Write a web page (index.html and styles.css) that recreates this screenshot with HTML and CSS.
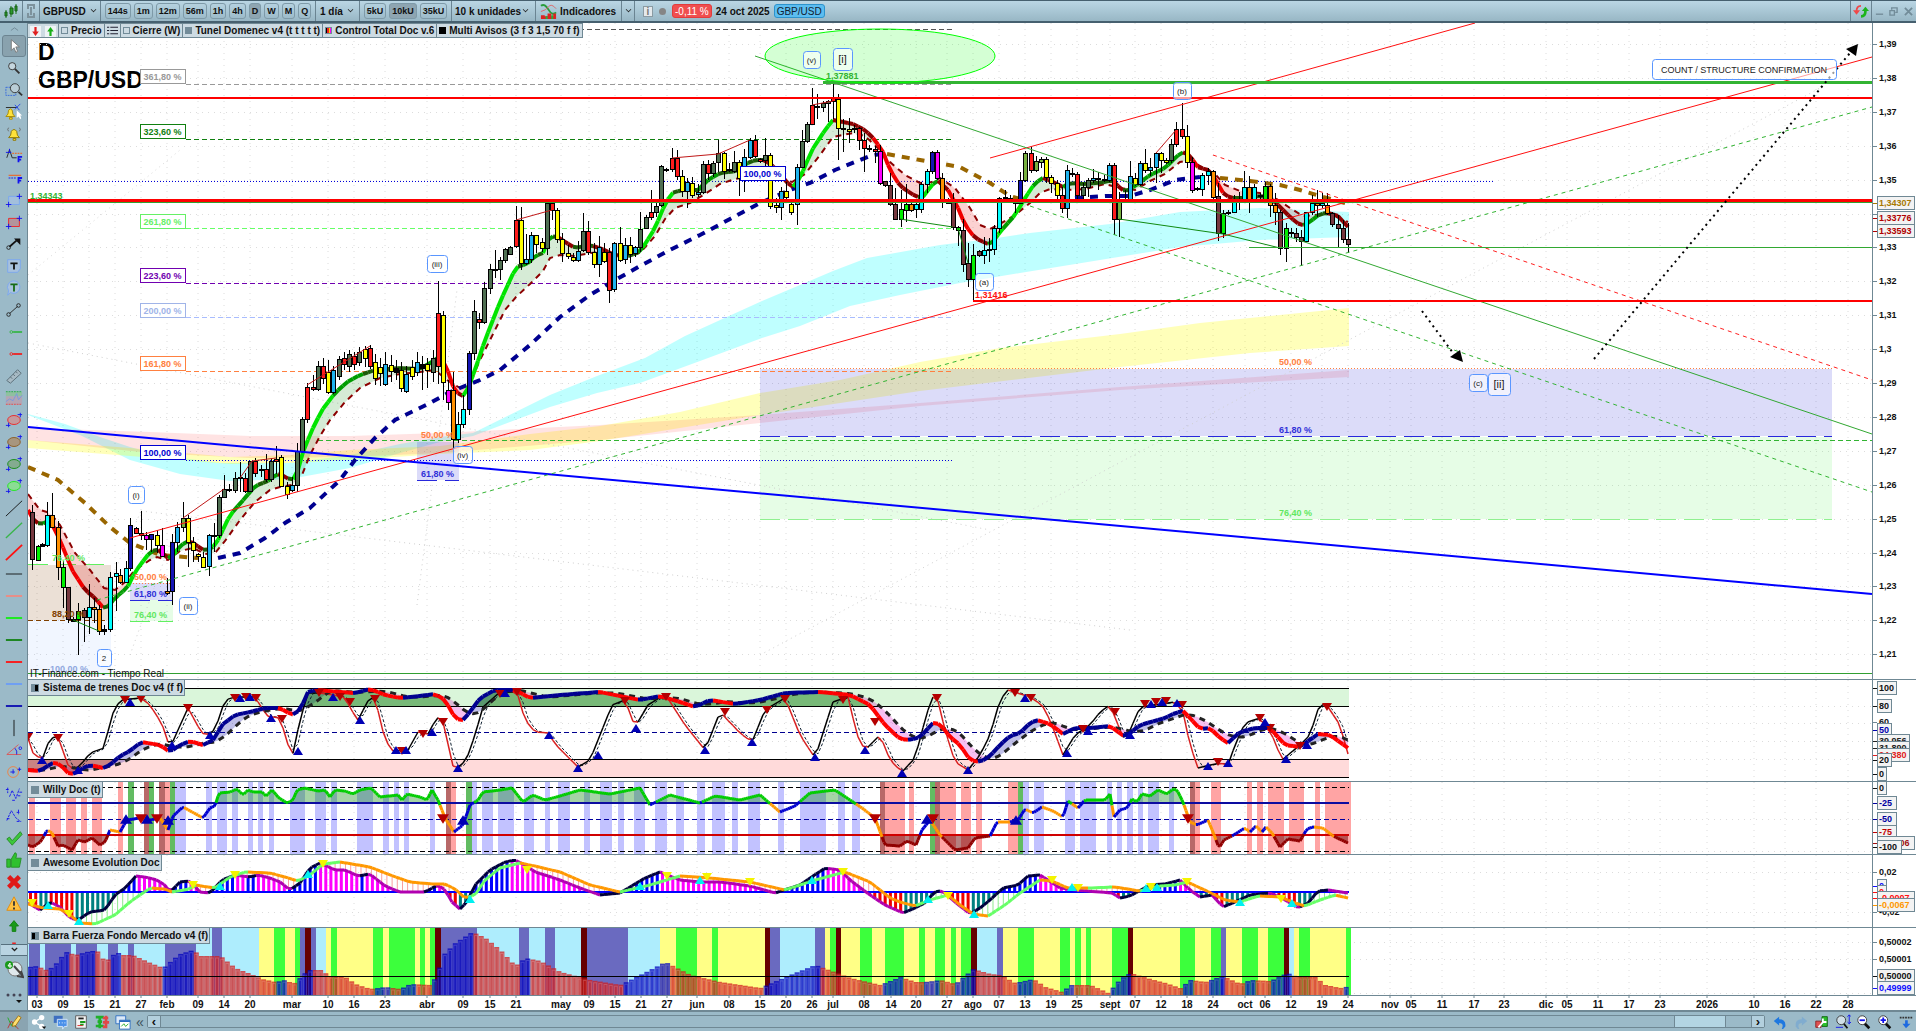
FILE: index.html
```html
<!doctype html>
<html lang="es">
<head>
    <meta charset="utf-8" />
    <title>GBP/USD - D</title>
    <link rel="stylesheet" href="styles.css">
</head>
<body>
<div id="app">
    <!-- barra superior -->
    <div class="topbar">
        <button class="cell logo" aria-label="Gráfico"><svg viewBox="0 0 16 16"><path d="M3 7v8M8 3v11M13 1v10" stroke="#1d7a1d"/><path d="M2 9h2v4H2zM7 5h3v6H7zM12 3h2v5h-2z" fill="#2c9a2c" stroke="#176017"/></svg></button>
        <button class="cell link" aria-label="Vincular"><svg viewBox="0 0 10 16"><path d="M2 6V2h6v4M2 10v4h6v-4M5 4v8" fill="none" stroke="#7d929c" stroke-width="2"/></svg></button>
        <button class="cell symbol">GBPUSD <i class="caret"></i></button>
        <div class="cell group times">
            <button>144s</button><button>1m</button><button>12m</button><button>56m</button><button>1h</button><button>4h</button><button class="on">D</button><button>W</button><button>M</button><button>Q</button>
        </div>
        <button class="cell period">1 día <i class="caret"></i></button>
        <div class="cell group units">
            <button>5kU</button><button class="on">10kU</button><button>35kU</button>
        </div>
        <button class="cell amount">10 k unidades <i class="caret"></i></button>
        <button class="cell ind"><svg viewBox="0 0 18 18"><path d="M1 3q4-3 8 4t8 3" fill="none" stroke="#2a9c3a" stroke-width="2"/><path d="M1 9q5-1 8-5t8 2" fill="none" stroke="#d66" stroke-width="1"/><path d="M1 17v-4h4v1h3v-3h4v3h2v-3h3v6z" fill="#d22"/><path d="M6 17v-3h2v3zM12 17v-4h2v4z" fill="#1fb53a"/></svg> Indicadores</button>
        <button class="cell drop" aria-label="Más indicadores"><i class="caret"></i></button>
        <div class="quote">
            <span class="info">i</span><span class="dot"></span>
            <span class="change">-0,11 %</span>
            <span>24 oct 2025</span>
            <a class="pair" href="#">GBP/USD</a>
        </div>
        <button class="cell refresh" aria-label="Recargar"><svg viewBox="0 0 18 16"><path d="M9 2Q4 2 4 8" fill="none" stroke="#f04848" stroke-width="2"/><path d="M0 7h8l-4 5z" fill="#f04848"/><path d="M9 14q5 0 5-6" fill="none" stroke="#1cb41c" stroke-width="3"/><path d="M10 8h8l-4-5z" fill="#1cb41c"/></svg></button>
        <div class="win">
            <button aria-label="Minimizar"><svg viewBox="0 0 10 10"><path d="M1 8h8" stroke="#728c99" stroke-width="1.5"/></svg></button>
            <button aria-label="Restaurar"><svg viewBox="0 0 10 10"><path d="M3 3V1h6v5H7M1 4h5v5H1z" fill="none" stroke="#728c99" stroke-width="1.5"/></svg></button>
            <button aria-label="Cerrar"><svg viewBox="0 0 10 10"><path d="M1 1l8 8M9 1l-8 8" stroke="#728c99" stroke-width="2"/></svg></button>
        </div>
    </div>

    <!-- herramientas -->
    <div class="side">
        <button class="scroll" aria-label="Subir"><svg viewBox="0 0 10 6"><path d="M1 5l4-3 4 3" fill="none" stroke="#6f8894"/></svg></button>
        <div class="tools">
            <button class="on" aria-label="Cursor"><svg viewBox="0 0 20 20"><path d="M7 3v12l3-3 2 5 2-1-2-5h4z" fill="#fff" stroke="#777"/></svg></button>
            <button aria-label="Zoom"><svg viewBox="0 0 20 20"><circle cx="8" cy="8" r="4" fill="#c5d6de" stroke="#333"/><path d="M11 11l5 5" stroke="#333" stroke-width="2"/></svg></button>
            <button aria-label="Zoom zona"><svg viewBox="0 0 20 20"><path d="M1 7h11v9H1z" fill="none" stroke="#36d" stroke-dasharray="2 1"/><circle cx="11" cy="8" r="5" fill="#b9cdd6" stroke="#333"/><path d="M15 12l4 4" stroke="#333" stroke-width="2"/></svg></button>
            <button aria-label="Alerta línea"><svg viewBox="0 0 20 20"><path d="M1 5h13" stroke="#222"/><path d="M1 15q3-2 3-7 2-3 4 0 0 5 3 7zM5 16h3v2H5z" fill="#ffe23a" stroke="#a98b00"/><path d="M11 2l5 6M17 1l-6 6" stroke="#24e"/><path d="M13 8v9l2-2 2 3 1-1-1-3h2z" fill="#fff"/></svg></button>
            <button aria-label="Alerta"><svg viewBox="0 0 20 20"><path d="M4 14q3-2 3-7 3-4 6 0 0 5 3 7zM9 15h3v2H9z" fill="#ffe23a" stroke="#8b7400"/><path d="M4 3Q2 5 4 7M16 3q2 2 0 4" fill="none" stroke="#666"/></svg></button>
            <button aria-label="Fibonacci"><svg viewBox="0 0 20 20"><path d="M2 12l3-9 3 9h5" fill="none" stroke="#222"/><path d="M1 6h6M5 2v4" stroke="#11e"/><path d="M8 7h11" stroke="#f50" stroke-dasharray="2 1"/><path d="M15 17v-6h4m-4 3h3" fill="none" stroke="#11e" stroke-width="2"/></svg></button>
            <button aria-label="Fibonacci rápido"><svg viewBox="0 0 20 20"><path d="M4 7h14" stroke="#f50"/><path d="M4 10h9" stroke="#11e" stroke-dasharray="2 1"/><path d="M15 16v-6h4m-4 3h3" fill="none" stroke="#11e" stroke-width="2"/></svg></button>
            <button aria-label="Rectángulo azul"><svg viewBox="0 0 20 20"><path d="M4 6h12v9H4z" fill="#a3bfdc" stroke="#79a6f0"/><path d="M1 15h6M4 12v6M13 6h6M16 3v6" stroke="#11e"/></svg></button>
            <button aria-label="Rectángulo rojo"><svg viewBox="0 0 20 20"><path d="M4 6h12v9H4z" fill="#b3949c" stroke="#e22"/><path d="M1 15h6M4 12v6M13 6h6M16 3v6" stroke="#11e"/></svg></button>
            <button aria-label="Flecha"><svg viewBox="0 0 20 20"><circle cx="4" cy="14" r="2" fill="none" stroke="#222"/><path d="M5 13l8-7" stroke="#111" stroke-width="2"/><path d="M10 4h7v7z" fill="#111"/></svg></button>
            <button aria-label="Texto"><svg viewBox="0 0 20 20"><path d="M3 3h14v10l-3 4H3z" fill="#a9c2dd" stroke="#79a6f0"/><path d="M6 7h8M10 7v7" stroke="#111" stroke-width="2"/></svg></button>
            <button aria-label="Comentario"><svg viewBox="0 0 20 20"><path d="M10 2a7 7 0 1 1-4 13l-3 3 1-5A7 7 0 0 1 10 2z" fill="#a9c2dd" stroke="#79a6f0"/><path d="M6 6h8M10 6v8" stroke="#176b17" stroke-width="2"/></svg></button>
            <button aria-label="Segmento"><svg viewBox="0 0 20 20"><path d="M5 14l9-8" stroke="#222"/><circle cx="4" cy="15" r="2" fill="none" stroke="#222"/><circle cx="15" cy="5" r="2" fill="none" stroke="#222"/></svg></button>
            <button aria-label="Semirrecta verde"><svg viewBox="0 0 20 20"><path d="M9 10h10" stroke="#39b54a" stroke-width="2"/><circle cx="7" cy="10" r="1.5" fill="none" stroke="#39b54a"/></svg></button>
            <button aria-label="Semirrecta roja"><svg viewBox="0 0 20 20"><path d="M9 10h10" stroke="#e22" stroke-width="2"/><circle cx="7" cy="10" r="1.5" fill="none" stroke="#e22"/></svg></button>
            <button aria-label="Regla"><svg viewBox="0 0 20 20"><path d="M2 15L14 3l4 4L6 18z" fill="#a7bac4" stroke="#566a74"/><path d="M6 11l2 2M9 8l2 2M12 5l2 2" stroke="#566a74"/></svg></button>
            <button aria-label="Canal"><svg viewBox="0 0 20 20"><path d="M1 3h18v5H1z" fill="#8fc0a0"/><path d="M1 8h18v9H1z" fill="#b3a6b4"/><path d="M1 14l4-3 4 2 4-8 2 7 4-5" fill="none" stroke="#7799e0"/><path d="M1 3h18" stroke="#2a4" stroke-dasharray="2 1"/><path d="M1 17h18" stroke="#e44" stroke-dasharray="2 1"/></svg></button>
            <button aria-label="Elipse roja"><svg viewBox="0 0 20 20"><ellipse cx="10" cy="10" rx="7" ry="5" fill="#c49a9e" stroke="#e22"/><path d="M1 16h5M4 13v5M14 4h5M17 2v5" stroke="#11e"/></svg></button>
            <button aria-label="Elipse marrón"><svg viewBox="0 0 20 20"><ellipse cx="10" cy="10" rx="7" ry="5" fill="#a7967e" stroke="#8a5a20"/><path d="M1 16h5M4 13v5M14 4h5M17 2v5" stroke="#11e"/></svg></button>
            <button aria-label="Elipse verde"><svg viewBox="0 0 20 20"><ellipse cx="10" cy="10" rx="7" ry="5" fill="#84ab90" stroke="#118a11"/><path d="M1 16h5M4 13v5M14 4h5M17 2v5" stroke="#11e"/></svg></button>
            <button aria-label="Elipse lima"><svg viewBox="0 0 20 20"><ellipse cx="10" cy="10" rx="7" ry="5" fill="#8bdc94" stroke="#1be81b"/><path d="M1 16h5M4 13v5M14 4h5M17 2v5" stroke="#11e"/></svg></button>
            <button aria-label="Recta negra"><svg viewBox="0 0 20 20"><path d="M1 19L19 2" stroke="#111"/></svg></button>
            <button aria-label="Recta verde"><svg viewBox="0 0 20 20"><path d="M1 19L19 2" stroke="#39b54a" stroke-width="1.5"/></svg></button>
            <button aria-label="Recta roja"><svg viewBox="0 0 20 20"><path d="M1 19L19 2" stroke="#f11" stroke-width="2"/></svg></button>
            <button aria-label="Horizontal negra"><svg viewBox="0 0 20 20"><path d="M1 10h18" stroke="#111"/></svg></button>
            <button aria-label="Horizontal salmón"><svg viewBox="0 0 20 20"><path d="M1 10h18" stroke="#f08a80" stroke-width="2"/></svg></button>
            <button aria-label="Horizontal lima"><svg viewBox="0 0 20 20"><path d="M1 10h18" stroke="#10f010" stroke-width="2"/></svg></button>
            <button aria-label="Horizontal verde"><svg viewBox="0 0 20 20"><path d="M1 10h18" stroke="#108010" stroke-width="2"/></svg></button>
            <button aria-label="Horizontal roja"><svg viewBox="0 0 20 20"><path d="M1 10h18" stroke="#f11" stroke-width="2"/></svg></button>
            <button aria-label="Horizontal azul"><svg viewBox="0 0 20 20"><path d="M1 10h18" stroke="#6a9cf8" stroke-width="2"/></svg></button>
            <button aria-label="Horizontal marino"><svg viewBox="0 0 20 20"><path d="M1 10h18" stroke="#0a0ab0" stroke-width="2"/></svg></button>
            <button aria-label="Vertical"><svg viewBox="0 0 20 20"><path d="M10 1v18" stroke="#111"/></svg></button>
            <button aria-label="Ángulo"><svg viewBox="0 0 20 20"><path d="M15 4L2 15h16" fill="none" stroke="#d55"/><path d="M11 8q3 3 2 7" fill="none" stroke="#11e"/><circle cx="17" cy="8" r="1.5" fill="none" stroke="#11e"/></svg></button>
            <button aria-label="Ciclo"><svg viewBox="0 0 20 20"><circle cx="9" cy="10" r="6" fill="none" stroke="#f08040"/><path d="M6 10h5M9 7v5M14 7h4M16 5v4" stroke="#11e"/></svg></button>
            <button aria-label="Ondas 12345"><svg viewBox="0 0 20 20"><path d="M1 5h3M3 3v6M5 13l3-7 4 9 4-11M8 17h3M16 8h3M14 12h4" fill="none" stroke="#11e" stroke-dasharray="3 1"/></svg></button>
            <button aria-label="Ondas abc"><svg viewBox="0 0 20 20"><path d="M2 15l5-11 5 8 5 4M2 13h4M13 6h4M15 3v5M13 16h5" fill="none" stroke="#11e" stroke-dasharray="3 1"/></svg></button>
            <button aria-label="Marca"><svg viewBox="0 0 20 20"><path d="M2 11l3-2 3 4 9-10 2 3-11 12z" fill="#3cc83c" stroke="#288a28"/></svg></button>
            <button aria-label="Me gusta"><svg viewBox="0 0 20 20"><path d="M2 9h4v9H2zM7 9l4-7q3 0 1 6h6l-2 10H7z" fill="#2fc12f" stroke="#259025"/></svg></button>
            <button aria-label="Cruz"><svg viewBox="0 0 20 20"><path d="M4 4l12 12M16 4L4 16" stroke="#e01818" stroke-width="5"/></svg></button>
            <button aria-label="Aviso"><svg viewBox="0 0 20 20"><path d="M10 2l8 15H2z" fill="#ffc040" stroke="#e08a10"/><path d="M10 7v5M10 14v2" stroke="#333" stroke-width="2"/></svg></button>
            <button aria-label="Flecha arriba"><svg viewBox="0 0 20 20"><path d="M10 4l5 6h-3v6H8v-6H5z" fill="#1a9a1a" stroke="#108010"/></svg></button>
            <button aria-label="Flecha abajo"><svg viewBox="0 0 20 20"><path d="M8 4h4v6h3l-5 6-5-6h3z" fill="#e22"/></svg></button>
        </div>
        <button class="scroll light" aria-label="Bajar"><svg viewBox="0 0 10 6"><path d="M2 1l3 3 3-3" fill="none" stroke="#222" stroke-width="1.5"/></svg></button>
        <button class="big" aria-label="Plantillas"><svg viewBox="0 0 20 20"><circle cx="11" cy="9" r="7" fill="#dfe8ec" stroke="#777"/><path d="M10 6l8 9M17 11l2 6-6-1" fill="none" stroke="#444" stroke-width="2"/><circle cx="5" cy="5" r="4" fill="#1a9a1a"/><path d="M6 8V3L4 6h4" fill="none" stroke="#fff"/></svg></button>
        <button class="big" aria-label="Más"><svg viewBox="0 0 20 20"><circle cx="4" cy="8" r="1.500" fill="#445"/><circle cx="10" cy="8" r="1.500" fill="#445"/><circle cx="16" cy="8" r="1.500" fill="#445"/><path d="M12 13h6l-3 3z" fill="#111"/></svg></button>
    </div>

    <!-- gráficos -->
    <div class="charts">
        <div class="pane main">
            <h1>D<br>GBP/USD</h1>
            <svg id="price" class="plot"></svg>
            <div class="tabs">
                <button class="ico" aria-label="Vender"><svg viewBox="0 0 10 10"><path d="M0 0h10v10H0z" fill="#eef3f6"/><path d="M4 1h2v4h2L5 9 2 5h2z" fill="#e02020"/></svg></button><button class="ico" aria-label="Comprar"><svg viewBox="0 0 10 10"><path d="M0 0h10v10H0z" fill="#eef3f6"/><path d="M4 9h2V5h2L5 1 2 5h2z" fill="#18b018"/></svg></button>
                <button class="tab"><i class="sq"></i>Precio</button>
                <button class="tab list" aria-label="Lista"><svg viewBox="0 0 10 10"><path d="M0 2h2M0 5h2M0 8h2M3 2h7M3 5h7M3 8h7" stroke="#223"/></svg></button>
                <button class="tab"><i class="sq"></i>Cierre (W)</button>
                <button class="tab"><i class="sq gray"></i>Tunel Domenec v4 (t t t t t)</button>
                <button class="tab"><i class="sq multi"></i>Control Total Doc v.6</button>
                <button class="tab"><i class="sq black"></i>Multi Avisos (3 f 3 1,5 70 f f)</button>
            </div>
        </div>
        <div class="pane trenes"><svg id="trenes" class="plot"></svg><button class="title"><i class="sq half"></i>Sistema de trenes Doc v4 (f f)</button></div>
        <div class="pane willy"><svg id="willy" class="plot"></svg><button class="title"><i class="sq gray"></i>Willy Doc (t)</button></div>
        <div class="pane awesome"><svg id="awesome" class="plot"></svg><button class="title"><i class="sq gray"></i>Awesome Evolution Doc</button></div>
        <div class="pane barra"><svg id="barra" class="plot"></svg><button class="title"><i class="sq flip"></i>Barra Fuerza Fondo Mercado v4 (f)</button></div>
        <div class="dates"><svg id="dates" class="plot"></svg></div>
    </div>

    <!-- barra inferior -->
    <div class="bottom">
        <button class="edit" aria-label="Dibujar"><svg viewBox="0 0 18 18"><path d="M2 4l4 9 2-4 3 6" fill="none" stroke="#2a2"/><path d="M2 16l4-8 8 9" fill="none" stroke="#b33"/><path d="M7 14l1-4 6-8 3 2-6 9z" fill="#ffe070" stroke="#a07010"/></svg></button>
        <button aria-label="Compartir"><svg viewBox="0 0 18 18"><path d="M4 9l8-5M4 9l8 5" stroke="#fff" stroke-width="1.5"/><circle cx="4" cy="9" r="3" fill="#fff"/><circle cx="12" cy="4" r="3" fill="#fff"/><circle cx="12" cy="14" r="3" fill="#fff"/><path d="M12 14h5l-2 3z" fill="#111"/></svg></button>
        <button aria-label="Chat"><svg viewBox="0 0 18 18"><path d="M2 2h10v8H2z" fill="#3d6fc0"/><path d="M6 6h11v8h-3l-2 3v-3H6z" fill="#4a90ea" stroke="#dce9fb"/><path d="M8 10h7" stroke="#fff" stroke-dasharray="1 2"/></svg></button>
        <button aria-label="Informe"><svg viewBox="0 0 18 18"><path d="M3 2h12v14H3z" fill="#f4f4f4" stroke="#555"/><path d="M6 5h6" stroke="#222" stroke-width="2"/><path d="M8 9h5v-1M8 12h4" stroke="#1a9a1a" stroke-width="2"/><path d="M5 13h6" stroke="#d22"/></svg></button>
        <button aria-label="Órdenes"><svg viewBox="0 0 18 18"><path d="M2 2h9v3H2zM4 7h5v3H4zM2 12h9v3H2zM5 2h3v14H5z" fill="#1fb02a"/><path d="M10 3h6v3h-6zM10 8h7v3h-7zM10 13h5v3h-5zM12 2h3v14h-3z" fill="#e04848"/></svg></button>
        <button aria-label="Ventanas"><svg viewBox="0 0 18 18"><path d="M1 2h11v9H1z" fill="#dce9f8" stroke="#2a6cc0"/><path d="M5 7h12v10H5z" fill="#fff" stroke="#2a6cc0"/><path d="M5 7h12v2H5z" fill="#2a6cc0"/><path d="M7 14l3-3 2 3 3-3" fill="none" stroke="#2a2"/></svg></button>
        <button class="fold" aria-label="Plegar">«</button>
        <div class="hscroll">
            <button aria-label="Izquierda">‹</button>
            <div class="track"><span class="thumb"></span></div>
            <button aria-label="Derecha">›</button>
        </div>
        <button aria-label="Deshacer"><svg viewBox="0 0 18 18"><path d="M2 8l6-5v3q8 0 7 8-2 3-4 3 3-7-3-7v3z" fill="#1e78e0"/></svg></button>
        <button class="off" aria-label="Rehacer"><svg viewBox="0 0 18 18"><path d="M16 8l-6-5v3q-8 0-7 8 2 3 4 3-3-7 3-7v3z" fill="#6fa4d4"/></svg></button>
        <button aria-label="Configurar"><svg viewBox="0 0 18 18"><path d="M2 8h6v7H2z" fill="#e05050" stroke="#822"/><path d="M9 3h6v11H9z" fill="#2cc02c" stroke="#161"/><path d="M5 15l6-7M10 5v4h4" stroke="#fff" stroke-width="2" fill="none"/></svg></button>
        <button aria-label="Ajustar zoom"><svg viewBox="0 0 18 18"><circle cx="7" cy="7" r="5" fill="#cfdfe8" stroke="#333"/><path d="M10 11l4 5" stroke="#111" stroke-width="2"/><path d="M1 15h8M16 1v10M14 3l2-2 2 2M14 9l2 2 2-2" stroke="#11e" fill="none"/></svg></button>
        <button aria-label="Alejar"><svg viewBox="0 0 18 18"><circle cx="7" cy="7" r="5" fill="#fff" stroke="#333"/><path d="M10 11l5 5" stroke="#111" stroke-width="3"/><path d="M4 7h6" stroke="#11e" stroke-width="2"/></svg></button>
        <button aria-label="Acercar"><svg viewBox="0 0 18 18"><circle cx="7" cy="7" r="5" fill="#fff" stroke="#333"/><path d="M10 11l5 5" stroke="#111" stroke-width="3"/><path d="M4 7h6M7 4v6" stroke="#11e" stroke-width="2"/></svg></button>
        <button class="last" aria-label="Ir al final"><svg viewBox="0 0 18 18"><path d="M2 4h15" stroke="#333" stroke-width="2" stroke-dasharray="2 1"/><path d="M8 7h3v4h3l-5 5-4-5h3z" fill="#1e6ae0"/></svg></button>
    </div>
</div>
<script src="chart.js"></script>
</body>
</html>
```
FILE: styles.css
```css
*{
    box-sizing:border-box;
    margin:0px;
    padding:0px;
}
html,body{
    width:100%;
    height:100%;
    overflow:hidden;
    background-color:#fff;
    font-family:"Liberation Sans",Arial,sans-serif;
    font-size:10px;
    color:#111;
}
button{
    border:none;
    background:none;
    font:inherit;
    color:inherit;
    cursor:pointer;
}
svg{
    display:block;
}
#app{
    display:grid;
    width:100%;
    height:100%;
    grid-template-columns:28px minmax(0,1fr);
    grid-template-rows:23px minmax(0,1fr) 21px;
}
/* barra superior */
.topbar{
    grid-column:1 / 3;
    display:flex;
    align-items:stretch;
    border-top:1px solid #46606f;
    border-bottom:2px solid #46606f;
    background:linear-gradient(#bad6e4,#98b7c5);
    font-weight:bold;
    white-space:nowrap;
}
.cell{
    display:flex;
    flex:none;
    align-items:center;
    padding:0px 4px;
    gap:3px;
    border-right:1px solid #6a8492;
}
.logo{
    width:23px;
    padding:0px 3px;
}
.link{
    width:17px;
    padding:0px 3px;
}
.symbol{
    width:61px;
    padding:0px 3px;
}
.group{
    justify-content:center;
    font-size:9px;
}
.times{
    width:215px;
}
.period{
    width:44px;
}
.units{
    width:92px;
}
.amount{
    width:84px;
    padding:0px 3px;
    gap:0px;
}
.group button{
    flex:none;
    height:16px;
    padding:0px 2px;
    border:1px solid #7e9aa8;
    border-radius:3px;
}
.group button.on{
    background-color:#8ea5b1;
}
.caret{
    flex:none;
    width:5px;
    height:5px;
    border-right:1px solid #222;
    border-bottom:1px solid #222;
    transform:rotate(45deg) scale(.8);
    margin:0px 0px 3px 2px;
}
.ind{
    width:86px;
}
.ind svg{
    width:17px;
}
.drop{
    width:13px;
    padding:0px 2px;
}
.quote{
    display:flex;
    flex:1;
    align-items:center;
    gap:4px;
    padding-left:8px;
}
.info{
    width:10px;
    height:11px;
    line-height:10px;
    border:1px solid #8b9ba3;
    background-color:#e4e9ec;
    color:#777;
    text-align:center;
}
.dot{
    width:7px;
    height:7px;
    margin:0px 2px;
    border-radius:50%;
    background-color:#858585;
}
.change,.pair{
    height:14px;
    line-height:13px;
    padding:0px 2px;
    border-radius:3px;
    font-weight:normal;
    text-decoration:none;
}
.change{
    background-color:#f04f4f;
    border:1px solid #e23c3c;
    color:#fff;
}
.pair{
    background-color:#5cbdf0;
    border:1px solid #2c93cc;
    color:#123;
}
.refresh{
    width:22px;
    padding:0px 2px;
    border-left:1px solid #6a8492;
}
.refresh svg{
    width:17px;
}
.win{
    display:flex;
    align-items:center;
    width:44px;
    justify-content:space-around;
}
.win svg{
    width:9px;
}
/* herramientas */
.side{
    display:flex;
    flex-direction:column;
    min-height:0px;
    padding-left:1px;
    border-right:1px solid #6f8894;
    background-color:#9bbac8;
}
.side .scroll{
    display:flex;
    align-items:center;
    justify-content:center;
    flex:none;
    height:12px;
}
.scroll svg{
    width:9px;
}
.side .light{
    border-top:1px solid #56707e;
    border-bottom:1px solid #56707e;
    background-color:#b9d4e2;
}
.tools{
    flex:1;
    min-height:0px;
    overflow:hidden;
}
.tools button,.side .big{
    display:flex;
    align-items:center;
    justify-content:center;
    width:24px;
    height:22px;
    margin:auto;
}
.tools .on{
    border:1px solid #6c8491;
    border-radius:3px;
    background-color:#89a2ae;
}
.side .big{
    flex:none;
    height:27px;
}
.tools svg{
    width:18px;
    height:18px;
}
.big svg{
    width:20px;
    height:20px;
}
/* paneles */
.charts{
    display:flex;
    flex-direction:column;
    min-width:0px;
    min-height:0px;
}
.pane{
    position:relative;
    flex:72 1 0px;
    min-height:0px;
    border-bottom:1px solid #6f8894;
}
.main{
    flex-grow:656;
}
.trenes{
    flex-grow:101;
}
.barra{
    flex-grow:67;
}
.dates{
    flex:none;
    height:14px;
    position:relative;
}
.plot{
    position:absolute;
    left:0px;
    top:0px;
    width:100%;
    height:100%;
    overflow:hidden;
    font-family:"Liberation Sans",Arial,sans-serif;
    font-size:9px;
    font-weight:bold;
}
#dates{
    font-size:10px;
}
.tabs{
    position:absolute;
    left:0px;
    top:0px;
    display:flex;
    height:15px;
    border:1px solid #6f8894;
    border-left:none;
    background-color:#cddbe3;
    font-weight:bold;
}
.tab{
    display:flex;
    align-items:center;
    gap:3px;
    padding:0px 2px;
    border-left:1px solid #6f8894;
    white-space:nowrap;
}
.ico{
    width:15px;
    padding:2px;
}
.ico svg,.list svg{
    width:11px;
}
.sq{
    width:8px;
    height:8px;
    border:1px solid #738c99;
}
.tab .sq{
    width:7px;
    height:7px;
}
.gray{
    background-color:#738c99;
}
.black{
    background-color:#000;
    border-color:#000;
}
.half{
    background:linear-gradient(90deg,#738c99 50%,#000 50%);
}
.flip{
    background:linear-gradient(90deg,#000 50%,#738c99 50%);
}
.multi{
    background:linear-gradient(90deg,#000 25%,#e22 25% 50%,#fc0 50% 75%,#f0f 75%);
}
h1{
    padding:15px 10px 0px 10px;
    font-size:23px;
    line-height:28px;
    color:#000;
}
.title{
    position:absolute;
    left:0px;
    top:0px;
    display:flex;
    align-items:center;
    gap:4px;
    height:16px;
    padding:0px 1px 0px 3px;
    border:1px solid #6f8894;
    border-left:none;
    border-top:none;
    background-color:#cddbe3;
    font-weight:bold;
}
/* barra inferior */
.bottom{
    grid-column:1 / 3;
    display:flex;
    align-items:center;
    border-top:2px solid #6f8894;
    background-color:#9bbac8;
}
.bottom button{
    flex:none;
    width:21px;
    height:17px;
}
.bottom svg{
    width:16px;
    height:16px;
    margin:auto;
}
.bottom .edit{
    width:28px;
    height:19px;
    background-color:#8aa4b1;
}
.bottom .fold{
    width:14px;
    font-size:14px;
    line-height:14px;
    color:#3d525e;
}
.hscroll{
    display:flex;
    flex:1;
    height:13px;
    margin:0px 4px 0px 0px;
    border:1px solid #6f8894;
    border-radius:2px;
}
.bottom .hscroll button{
    width:12px;
    height:11px;
    line-height:8px;
    font-size:13px;
    font-weight:bold;
    background-color:#b3d0de;
}
.track{
    flex:1;
    display:flex;
    justify-content:flex-end;
    border-left:1px solid #6f8894;
    border-right:1px solid #6f8894;
}
.thumb{
    width:52px;
    margin-right:25px;
    border-left:1px solid #6f8894;
    border-right:1px solid #6f8894;
    background-color:#b3d5e3;
}
.bottom .off{
    opacity:.6;
}
```
FILE: chart.js
```js
// size of the layout the data coordinates belong to
var LEFT = 28, PLOT = 1845, AXIS = 43, LAST = 1349;
var GRID = '#dcdcdc', EDGE = '#6f8894';

// [x, text]
var dates = [[37,'03'],[63,'09'],[89,'15'],[115,'21'],[141,'27'],[167,'feb'],[198,'09'],[224,'14'],[250,'20'],[292,'mar'],[328,'10'],[354,'16'],[385,'23'],[427,'abr'],[463,'09'],[490,'15'],[516,'21'],[561,'may'],[589,'09'],[615,'15'],[641,'21'],[667,'27'],[697,'jun'],[729,'08'],[760,'15'],[786,'20'],[812,'26'],[833,'jul'],[864,'08'],[891,'14'],[916,'20'],[947,'27'],[973,'ago'],[999,'07'],[1025,'13'],[1051,'19'],[1077,'25'],[1110,'sept'],[1135,'07'],[1161,'12'],[1187,'18'],[1213,'24'],[1245,'oct'],[1265,'06'],[1291,'12'],[1322,'19'],[1348,'24'],[1390,'nov'],[1411,'05'],[1442,'11'],[1474,'17'],[1504,'23'],[1546,'dic'],[1567,'05'],[1598,'11'],[1629,'17'],[1660,'23'],[1707,'2026'],[1754,'10'],[1785,'16'],[1816,'22'],[1848,'28']];

// candles: x,high,top,bottom,low,colour
var candles = (
'32,505,512,559,570,w 38,545,546,560,560,l 42,543,544,546,547,k 47,502,515,545,547,c 52,493,515,527,528,o 58,521,527,567,580,o 63,561,567,587,608,l 68,587,587,619,623,w 73,617,619,621,622,k 78,603,611,619,655,l 84,608,610,617,642,w 89,584,607,617,634,c 94,598,607,609,623,o 99,605,609,631,635,o 104,625,629,631,635,k ' +
'110,572,577,629,632,c 116,562,573,576,611,c 120,569,575,582,584,o 126,561,568,582,583,c 130,518,525,568,571,n 136,527,528,533,533,r 141,511,533,535,540,r 146,532,535,539,550,m 151,534,534,539,552,n 157,530,535,545,553,y 162,528,545,556,557,m 167,578,591,593,595,o 172,534,542,591,605,n 177,522,527,542,552,b 183,502,518,527,532,v ' +
'188,515,518,542,567,y 193,537,542,550,562,y 198,553,554,556,562,y 203,552,557,567,568,y 209,534,535,566,576,b 214,523,535,536,552,k 219,495,497,535,538,g 224,475,489,497,498,g 229,484,489,490,492,r 235,472,478,490,493,g 240,462,477,478,492,k 245,473,478,491,493,r 250,461,461,491,492,g 255,458,461,473,477,r 261,465,469,470,477,k 266,454,469,479,482,r ' +
'271,458,461,479,482,g 276,446,459,461,474,r 281,455,457,486,487,y 287,482,486,494,499,y 292,477,485,490,492,b 297,443,451,485,492,g 302,417,419,451,453,g 307,383,387,419,423,r 313,375,387,389,391,r 318,361,366,389,391,g 323,358,366,378,384,r 328,360,372,392,394,y 333,366,370,392,394,b 339,356,359,376,380,g 344,352,358,364,370,r 349,350,354,366,372,g ' +
'354,352,356,364,370,r 359,347,352,362,366,g 365,346,349,358,367,y 370,345,348,366,369,r 375,354,362,378,385,y 380,358,367,373,386,y 385,352,364,384,386,b 391,355,365,371,382,y 396,360,368,372,380,k 401,362,370,388,392,y 406,366,374,391,393,b 412,360,367,376,380,y 417,352,362,372,376,b 422,356,364,368,390,k 427,358,364,370,388,y 433,350,358,372,382,g ' +
'438,281,313,366,384,r 443,311,315,382,400,y 448,380,390,402,410,m 453,372,390,439,448,o 458,412,424,439,443,c 463,395,409,424,428,c 469,351,353,409,415,n 474,300,311,353,360,g 479,313,319,322,329,r 484,282,288,322,324,g 490,264,269,288,294,g 495,250,269,270,278,k 500,257,260,269,280,g 505,248,249,260,263,g 510,246,247,254,254,g ' +
'516,206,220,246,248,r 521,207,220,263,270,y 526,234,259,263,265,b 531,232,235,259,263,b 536,235,235,244,253,y 542,238,242,248,252,y 547,202,203,248,255,g 552,203,203,210,220,r 557,208,210,239,243,y 562,233,239,253,262,y 568,245,253,256,259,y 573,253,257,260,262,y 578,241,251,260,262,b 583,213,231,250,252,g 588,221,231,252,255,r ' +
'594,243,252,264,268,y 599,236,247,264,277,b 604,243,252,261,263,y 609,248,252,290,303,r 614,242,243,289,292,b 620,227,243,260,262,y 625,238,245,259,264,b 630,237,245,254,263,y 635,246,247,253,257,b 640,212,229,247,252,g 646,215,217,228,228,g 651,190,212,217,220,r 656,203,206,212,217,g 661,165,166,205,207,g 666,168,169,170,172,r ' +
'672,148,158,169,172,r 677,150,158,176,180,r 682,170,176,191,197,y 687,178,182,191,208,b 692,177,183,195,198,y 698,184,192,194,197,b 703,161,164,192,194,g 708,160,164,173,180,r 713,161,163,173,177,g 718,140,153,162,172,g 724,152,153,171,179,y 729,163,169,170,172,b 734,151,162,171,173,g 739,160,162,178,196,y 744,149,157,177,192,b ' +
'750,138,140,157,159,b 755,135,140,156,158,r 760,158,159,161,163,r 765,138,155,160,170,g 770,153,155,206,209,y 776,198,205,207,213,y 781,187,191,207,220,b 786,182,191,197,199,y 791,201,204,212,215,y 797,164,167,204,225,b 802,130,141,167,168,g 807,122,124,141,143,g 812,88,105,124,125,r 817,94,106,107,119,r 823,101,103,107,112,g ' +
'828,100,101,103,122,g 833,84,98,101,119,r 838,94,99,128,160,y 843,119,128,129,152,k 849,118,129,131,143,y 854,125,128,129,133,k 859,127,128,140,150,r 864,133,140,148,172,r 869,145,148,149,152,r 875,146,149,151,163,r 880,145,151,183,185,m 885,181,181,185,187,w 890,173,185,204,206,w 895,188,204,219,220,w 901,190,209,219,227,l ' +
'906,184,204,210,222,l 911,203,204,210,212,o 916,199,204,209,218,c 921,182,184,209,213,c 927,169,171,184,193,c 932,151,152,171,174,n 937,150,152,178,180,m 942,173,178,199,208,o 948,198,202,203,204,k 953,193,202,227,230,w 958,226,227,230,246,l 963,219,230,264,272,w 968,243,263,279,287,w 973,244,255,279,300,l 979,250,251,255,257,w ' +
'984,237,250,255,264,c 989,238,249,250,262,k 994,225,228,249,255,c 999,197,198,228,233,c 1005,190,197,198,200,k 1010,195,198,199,202,k 1015,200,202,203,213,k 1020,172,180,203,204,n 1025,151,153,180,182,v 1031,147,153,170,173,r 1036,156,161,170,172,v 1041,157,159,162,168,v 1046,157,159,177,183,y 1051,175,177,183,193,y 1057,180,183,195,203,y ' +
'1062,187,195,208,213,r 1067,165,170,208,218,b 1072,168,173,174,177,k 1077,172,174,195,200,r 1083,183,187,195,203,g 1088,178,180,187,197,g 1093,169,178,180,183,b 1098,172,178,179,190,k 1104,175,179,180,182,k 1109,163,165,180,182,b 1114,163,165,219,235,r 1119,192,202,219,237,v 1125,190,201,202,203,k 1130,161,176,199,203,b 1135,173,178,184,186,y ' +
'1140,161,163,184,186,b 1145,149,163,170,173,y 1150,158,167,170,176,b 1156,152,153,167,183,b 1161,152,153,160,173,y 1166,158,160,162,164,y 1171,139,144,160,163,g 1176,122,129,144,147,r 1182,103,129,136,139,r 1187,125,136,162,168,y 1192,157,162,190,193,m 1197,187,188,189,191,k 1202,173,175,189,196,c 1208,168,171,175,185,c 1213,170,171,197,202,o ' +
'1218,183,196,233,241,w 1223,210,213,233,238,l 1228,210,212,213,215,k 1234,195,201,212,213,c 1239,192,200,201,210,k 1244,171,187,200,201,c 1249,176,187,200,213,o 1254,184,187,200,202,c 1260,193,195,196,203,k 1265,182,186,200,201,l 1270,184,186,205,217,o 1275,193,205,212,225,o 1280,210,212,248,255,w 1286,223,228,248,262,l 1291,228,232,233,237,k ' +
'1296,228,233,237,242,w 1301,230,237,241,266,w 1306,212,212,241,242,c 1312,195,203,212,215,c 1317,190,203,205,217,o 1322,193,203,205,208,c 1327,193,205,213,215,o 1332,212,213,224,227,w 1338,215,224,228,247,w 1343,220,228,239,243,w 1348,223,239,244,253,w').split(' ');

var colors = {r:'#ff1c1c',g:'#4f6f52',y:'#ffff00',c:'#00ffff',b:'#20b4ee',n:'#1414b4',m:'#ff00ff',o:'#ff9000',w:'#76383f',l:'#00f000',k:'#000',v:'#78b040'};

// averages of the tunnel
var fast = [28,510,32,518,40,525,50,520,60,540,72,570,85,590,95,598,105,610,115,598,127,588,135,572,150,552,157,549,168,558,172,557,180,546,187,541,193,543,205,551,213,547,218,540,230,515,245,498,255,486,270,480,276,474,282,475,292,481,298,470,303,452,312,430,322,410,335,393,347,382,360,375,375,370,400,368,420,369,432,362,440,356,447,368,452,385,460,396,465,396,475,370,485,340,500,302,516,267,527,264,535,256,543,253,548,240,555,235,565,242,575,248,590,245,605,250,612,254,625,257,640,252,655,228,665,204,672,193,682,190,698,190,708,180,720,173,737,171,745,164,755,160,765,160,775,168,785,180,792,188,800,178,812,150,825,130,833,120,853,124,865,130,875,140,883,152,890,170,900,186,915,196,922,198,932,185,937,180,948,190,958,208,965,225,975,238,988,244,992,243,1000,232,1015,215,1025,198,1035,183,1043,178,1053,182,1063,187,1070,183,1085,184,1105,182,1112,180,1118,186,1125,192,1135,186,1150,175,1165,168,1175,158,1182,152,1190,155,1197,167,1208,170,1215,178,1222,192,1230,198,1245,198,1260,196,1270,198,1278,205,1290,217,1301,226,1308,223,1320,214,1328,213,1338,216,1348,227];
var slow = [28,494,40,510,50,513,60,525,75,553,90,570,104,588,115,590,125,582,135,570,150,560,157,557,168,560,180,551,193,548,205,554,215,553,225,541,240,520,255,502,270,490,280,487,292,485,302,475,310,455,320,436,330,420,345,402,360,388,380,378,400,374,420,372,435,370,447,380,460,388,468,388,480,360,495,330,505,310,516,297,530,284,543,271,550,258,560,255,575,256,590,253,605,252,620,256,640,253,655,236,665,219,675,208,690,203,705,194,720,184,735,179,750,177,765,176,780,178,792,182,805,174,820,155,833,137,853,133,865,136,880,150,890,162,905,175,920,183,932,182,940,178,955,188,970,208,980,225,990,229,1000,224,1015,215,1030,203,1040,193,1050,189,1065,190,1085,189,1105,184,1120,188,1135,190,1150,181,1165,174,1180,162,1190,160,1200,166,1215,174,1225,185,1240,191,1260,193,1275,198,1290,208,1303,216,1315,215,1330,214,1348,222];
var trend = [
    ['#996600', [28,467,58,480,85,503,110,527,130,543,145,549,160,555,198,558]],
    ['#000090', [218,558,240,553,265,538,285,523,310,508,340,480,355,460,375,438,395,420,430,403,448,393,460,388,480,380,500,370,530,345,560,317,590,295,610,283,640,266,670,250,700,235,730,219,760,203,790,190,810,183,835,170,870,156,880,154]],
    ['#996600', [887,154,920,160,960,167,990,183,1010,196,1020,199]],
    ['#000090', [1075,198,1105,196,1130,196,1150,190,1175,180,1200,177]],
    ['#996600', [1220,178,1250,181,1280,185,1300,190,1320,196,1348,204]]
];
var clouds = [
    ['rgba(0,255,255,.25)', [28,414,65,424,100,437,130,447,160,455,220,463,290,463,350,455,400,444,440,437,473,433,550,395,597,376,645,358,685,336,762,301,800,285,833,271,867,258,940,245,990,239,1030,233,1110,224,1180,212,1260,208,1349,212,1349,237,1260,240,1180,247,1100,260,1020,273,960,283,900,295,850,306,800,326,762,338,700,361,640,383,597,393,550,407,473,436,440,442,400,453,350,468,290,479,230,481,180,474,130,460,80,435,28,415]],
    ['rgba(255,255,0,.27)', [28,440,130,448,230,457,290,455,350,450,440,446,530,434,600,426,680,412,760,393,840,380,920,362,1000,348,1120,334,1200,323,1349,308,1349,346,1250,353,1120,367,1020,379,920,391,760,415,600,441,530,450,440,454,350,460,290,463,230,464,130,456,28,448]],
    ['rgba(255,60,60,.14)', [28,428,150,432,250,436,350,436,440,433,600,425,760,415,920,403,1120,387,1349,370,1349,377,1120,390,920,406,760,423,600,440,440,453,350,457,250,458,150,453,28,440]]
];

// x1,y1,x2,y2,colour,width,dash
var segments = [
    [28,343,990,530,'#d0d0d0',1,'1 4'],[141,511,1130,630,'#d0d0d0',1,'1 4'],[78,655,141,511,'#d0d0d0',1,'1 4'],[130,655,175,530,'#d0d0d0',1,'1 4'],[417,605,457,290,'#d0d0d0',1,'1 4'],[760,655,1820,88,'#d0d0d0',1,'1 4'],[28,275,180,150,'#d8d8d8',1,'1 4'],
    [475,29,953,29,'#555',1,'5 3'],[186,84,953,84,'#999',1,'5 3'],[186,139,953,139,'#108010',1,'5 3'],[28,181,1493,181,'#0000dc',1,'1 2'],[186,228,953,228,'#66ff66',1,'5 3'],[186,283,953,283,'#7000b0',1,'5 3'],[186,317,953,317,'#a8bcff',1,'5 3'],[186,371,953,371,'#ff8040',1,'5 3'],[186,460,953,460,'#0000dc',1,'1 2'],[318,440,1872,440,'#32b432',1,'5 3'],
    [28,564,104,564,'#60f060',1,'20 8'],[28,620,111,620,'#804000',1,'5 3'],
    [130,583,173,583,'#ff8040',1,'1 2'],[130,600,173,600,'#2828dc',1,'20 8'],[130,621,173,621,'#60f060',1,'20 8'],[417,480,459,480,'#2828dc',1,'20 8'],
    [760,368,1832,368,'#ff8040',1,'1 2'],[760,436,1832,436,'#2828dc',1,'20 8'],[760,519,1832,519,'#90f090',1,'20 8'],
    [28,673,1872,673,'#32a032',1]
];
var overlay = [
    [130,538,1872,57,'#ff1010',1],[990,158,1475,23,'#ff1010',1],[755,56,1872,434,'#32a832',1],[28,427,1872,594,'#0000ff',2],
    [97,600,1872,107,'#32b432',1,'4 4'],[1030,206,1872,492,'#32b432',1,'4 4'],[1213,155,1872,380,'#ff2020',1,'4 4'],
    [183,518,224,489,'#c01818',1],[240,478,252,461,'#c01818',1],[252,461,276,458,'#c01818',1],[307,385,370,346,'#c01818',1],[516,220,552,210,'#c01818',1],[672,158,718,154,'#c01818',1],[718,154,750,140,'#c01818',1],[812,105,833,101,'#c01818',1],[1156,153,1176,130,'#c01818',1],
    [73,620,99,631,'#108a10',1],[900,219,953,227,'#108a10',1],[958,228,968,263,'#108a10',1],[1119,219,1223,234,'#108a10',1],[1223,234,1280,248,'#108a10',1],
    [823,82,1872,82,'#32b432',3],[28,98,1872,98,'#ff0000',2],[28,202,1872,202,'#32a032',1],[28,200,1872,200,'#ff0000',3],[1249,247,1872,247,'#32a832',1],[973,301,1872,301,'#ff0000',2]
];
// x,y,w,h,colour
var zones = [
    [28,565,83,55,'rgba(128,64,0,.16)'],[28,620,83,56,'rgba(100,150,255,.09)'],
    [130,583,43,17,'rgba(40,40,220,.17)'],[130,600,43,21,'rgba(60,240,60,.13)'],[417,442,42,38,'rgba(40,40,220,.17)'],
    [760,369,1072,67,'rgba(40,40,220,.16)'],[760,437,1072,82,'rgba(60,240,60,.13)']
];
var fibTexts = [[52,561,'76,40 %','#60e860'],[52,617,'88,20 %','#804000'],[50,672,'100,00 %','#90a8e0'],[134,580,'50,00 %','#ff8040'],[134,597,'61,80 %','#3030d8'],[134,618,'76,40 %','#60e860'],[421,438,'50,00 %','#ff8040'],[421,477,'61,80 %','#3030d8'],[1279,365,'50,00 %','#ff8040'],[1279,433,'61,80 %','#3030d8'],[1279,516,'76,40 %','#60e860'],[30,199,'1,34343','#32b432'],[826,79,'1,37881','#32b432'],[975,298,'1,31416','#ff1010']];
var fibBoxes = [[140,69,'361,80 %','#999'],[140,124,'323,60 %','#108010'],[140,214,'261,80 %','#66f066'],[140,268,'223,60 %','#7000b0'],[140,303,'200,00 %','#a0b4e8'],[140,356,'161,80 %','#ff8040'],[140,445,'100,00 %','#0000d0'],[740,166,'100,00 %','#0000d0']];
// wave counts: x,y,w,h,text,size
var waves = [[128,486,16,17,'(i)',8],[179,597,18,17,'(ii)',8],[427,255,20,17,'(iii)',8],[453,446,19,17,'(iv)',8],[97,649,14,17,'2',8],[803,51,17,17,'(v)',8],[833,48,19,22,'[i]',11],[975,273,18,17,'(a)',8],[1173,82,18,17,'(b)',8],[1469,374,18,17,'(c)',8],[1488,373,22,22,'[ii]',11],[1652,59,184,20,'COUNT / STRUCTURE CONFIRMATION',9]];

var train = [28,770,40,771,52,763,60,764,68,773,75,774,83,768,90,765,103,768,110,765,120,756,130,751,141,742,160,745,170,752,180,745,190,741,203,745,213,740,223,724,235,715,250,712,265,708,280,708,292,715,300,710,308,692,315,690,340,692,355,693,370,689,385,695,400,698,420,696,435,694,445,700,455,718,462,721,470,712,480,698,495,690,515,690,530,698,540,697,560,695,600,692,640,700,660,696,680,702,695,707,710,700,735,704,760,700,785,693,820,692,850,695,870,705,885,725,900,739,910,740,920,737,933,723,940,724,950,737,960,745,970,760,980,762,990,756,1000,745,1010,736,1020,733,1030,723,1037,720,1050,724,1063,734,1075,728,1090,728,1110,726,1125,737,1140,725,1165,718,1175,713,1183,711,1190,718,1200,729,1210,728,1220,738,1228,743,1240,732,1255,728,1270,728,1285,745,1300,747,1318,734,1330,735,1348,748];
var stoch = [28,738,33,753,42,760,50,738,58,737,68,765,75,770,85,760,90,753,104,748,112,715,120,700,141,698,150,705,162,724,170,748,178,730,188,708,200,730,205,736,215,730,225,700,235,697,255,697,267,716,280,718,292,758,300,720,308,693,320,693,345,697,350,708,358,720,370,697,375,698,385,740,393,751,408,750,418,732,428,734,437,717,443,722,453,766,460,768,468,755,475,735,483,707,500,692,517,692,525,720,535,732,548,733,556,745,578,767,590,760,600,735,612,705,625,700,635,727,648,705,665,694,685,725,705,750,720,712,740,733,752,742,765,710,785,698,800,735,815,758,833,702,848,697,857,735,865,750,880,735,890,760,902,772,915,758,925,720,932,697,937,697,945,730,955,762,968,770,980,755,990,735,1000,700,1008,690,1030,697,1042,705,1050,720,1063,755,1075,735,1090,725,1100,712,1110,705,1125,742,1140,707,1175,702,1183,712,1190,745,1198,768,1210,765,1220,763,1228,765,1235,745,1245,723,1260,718,1272,735,1282,760,1300,745,1310,735,1320,703,1328,707,1340,725,1348,754];
var trainDown = [28,737,58,738,125,700,141,699,188,708,235,698,246,697,256,698,282,719,319,693,340,697,350,702,375,699,402,751,423,734,443,722,500,694,517,692,625,701,666,697,725,712,767,710,785,699,843,700,875,722,937,698,1015,693,1031,698,1083,729,1115,712,1145,704,1156,702,1166,701,1182,705,1218,762,1260,718,1270,728,1300,746,1327,707];
var trainUp = [42,760,78,770,130,702,172,745,210,735,240,698,250,697,271,718,298,751,333,697,360,720,396,750,406,750,432,732,458,768,505,693,549,735,578,768,598,755,636,728,705,750,752,742,815,757,865,750,902,773,968,770,1025,698,1067,753,1088,731,1130,735,1151,704,1162,702,1177,703,1208,766,1228,763,1265,722,1286,759,1307,745];

var willy = [28,845,33,847,40,842,43,838,47,830,52,833,58,846,63,845,72,850,78,840,85,842,92,838,100,845,105,842,110,830,120,832,127,820,140,818,150,820,160,818,168,830,173,816,183,807,203,818,210,808,215,806,219,793,230,792,237,789,243,795,248,790,253,792,262,792,266,796,272,790,279,798,287,803,293,800,297,790,305,788,318,791,325,790,330,797,335,790,345,791,353,794,360,790,371,788,380,797,398,795,402,800,407,794,420,797,427,800,432,790,438,800,445,818,454,832,463,825,470,805,478,800,483,792,500,790,512,788,523,802,533,795,545,800,560,796,580,790,610,794,640,788,650,805,670,795,700,803,715,796,740,800,760,795,780,812,795,806,810,793,835,790,850,800,862,808,875,818,885,845,900,846,907,841,916,845,922,830,930,820,940,835,947,842,955,850,968,848,975,838,990,836,997,822,1010,822,1018,820,1025,809,1033,813,1042,807,1053,811,1063,817,1068,801,1078,808,1085,800,1105,800,1110,794,1114,817,1120,810,1127,808,1132,799,1137,802,1142,794,1150,796,1158,790,1167,794,1173,789,1177,790,1183,802,1190,822,1197,825,1208,820,1213,832,1219,848,1224,840,1232,836,1245,828,1250,832,1256,826,1262,832,1266,827,1272,833,1280,847,1288,839,1300,841,1307,829,1313,827,1323,828,1333,836,1348,843];
var willyBands = {
    '#ffa4a4': [29,35,50,61,66,76,81,87,92,102,118,123,165,170,451,456,885,905,909,914,940,956,961,971,976,982,1008,1018,1195,1200,1211,1221,1247,1252,1257,1263,1268,1284,1289,1304,1315,1320,1325,1351],
    '#62bc62': [128,134,149,154,170,175,466,472,930,935,1018,1023],
    '#b86868': [144,149,159,165,446,451,880,885,935,940,1190,1195],
    '#c2c2ff': [175,186,206,212,217,227,232,238,248,253,258,263,269,274,290,305,315,326,331,337,357,373,383,389,394,399,404,409,430,435,472,477,482,493,498,514,524,534,545,550,558,570,584,590,600,612,618,624,634,645,655,667,676,684,697,705,712,725,732,738,748,760,778,784,800,826,838,845,852,860,1023,1029,1034,1044,1065,1075,1080,1096,1107,1112,1117,1122,1127,1133,1138,1143,1148,1159,1169,1174]
};

var osc = [28,903,40,910,50,902,60,907,70,918,78,920,90,912,105,910,115,895,125,888,136,876,145,877,157,880,165,885,170,892,180,882,190,881,200,892,210,893,222,880,235,875,250,877,258,875,270,878,280,882,290,890,300,883,310,868,320,863,335,870,345,870,358,876,370,874,385,886,400,892,425,892,438,885,445,890,452,902,460,909,467,902,475,885,490,870,505,862,515,860,525,865,535,872,548,876,560,880,580,888,600,895,620,893,645,878,660,872,680,880,700,882,720,882,750,886,775,893,800,885,825,868,840,870,850,880,870,895,885,905,903,913,915,908,925,903,932,895,938,890,945,893,955,902,970,914,980,908,990,900,1003,888,1018,885,1028,876,1040,875,1048,880,1060,888,1075,890,1100,892,1112,893,1120,898,1130,896,1150,885,1165,884,1180,880,1190,890,1200,897,1212,895,1223,907,1235,902,1250,895,1270,893,1280,897,1290,903,1298,908,1308,903,1318,891,1328,890,1348,893];
var oscSignal = [28,904,43,908,60,909,70,915,80,923,95,924,115,915,130,902,150,888,165,889,172,892,190,889,195,885,215,888,230,877,245,872,270,873,285,877,298,881,310,875,323,864,340,862,370,867,390,875,410,882,432,884,445,884,455,889,465,898,475,895,485,880,500,868,520,863,535,866,560,872,590,885,620,892,650,885,680,876,710,878,750,882,785,890,815,880,845,872,870,882,890,898,900,902,915,906,930,900,948,895,960,905,973,914,988,916,1005,905,1020,893,1040,880,1052,881,1068,888,1090,888,1115,887,1140,891,1160,886,1175,885,1187,882,1205,890,1225,900,1240,902,1258,896,1280,897,1295,903,1305,906,1320,900,1335,895,1348,898];
var oscDown = [32,903,69,914,193,885,235,875,323,864,527,870,667,876,707,877,750,882,843,872,948,896,1052,880,1078,888,1151,887,1187,882,1281,899];
var oscUp = [48,905,79,921,220,886,308,874,470,899,640,886,700,880,812,880,928,899,974,914,1072,887,1146,888,1157,887,1240,902,1292,903];

// market state: end of each band + colour
var P = '#6a6ac0', C = '#aeedfd', Y = '#ffff86', L = '#3cff3c', D = '#660000';
var states = [29,C,40,P,45,C,71,P,76,C,97,P,108,C,118,P,128,C,134,P,165,C,196,P,212,C,222,P,259,C,274,Y,285,L,295,Y,300,L,305,P,311,D,316,P,326,C,331,Y,337,L,373,Y,383,L,389,Y,415,L,420,Y,425,L,430,Y,435,L,441,D,477,P,519,C,529,P,545,C,555,P,581,C,587,D,628,P,660,C,676,Y,697,L,712,Y,718,L,765,Y,770,D,780,P,815,C,825,P,830,Y,836,L,841,D,860,Y,872,L,885,Y,904,L,919,Y,925,L,935,Y,945,L,951,Y,956,L,961,Y,971,L,977,D,997,C,1003,P,1018,Y,1034,L,1060,Y,1070,L,1075,Y,1081,L,1086,Y,1091,L,1112,Y,1128,L,1133,D,1180,Y,1195,L,1211,Y,1221,L,1226,P,1242,Y,1258,L,1268,Y,1284,L,1289,D,1294,C,1299,Y,1310,L,1346,Y,1351,L];
var force = [28,967,37,966,45,970,53,967,60,958,66,952,75,955,90,951,97,951,105,962,116,952,122,955,132,955,150,963,163,968,172,960,180,954,193,950,200,956,220,956,235,968,250,974,262,979,275,982,285,980,293,984,308,970,320,970,330,976,345,977,355,984,370,989,385,987,400,989,410,984,430,985,437,975,443,955,455,943,472,932,485,938,500,950,515,966,525,958,540,961,560,972,590,980,620,985,650,970,665,962,690,975,720,982,760,988,790,975,815,965,850,978,880,985,900,977,915,982,925,982,940,980,955,984,973,969,990,974,1000,975,1015,983,1033,979,1045,987,1062,992,1070,985,1090,985,1108,993,1120,979,1130,973,1150,979,1165,983,1180,988,1190,980,1205,982,1222,976,1240,984,1250,980,1270,981,1287,973,1297,977,1315,977,1325,985,1340,988,1350,986];

// value of a flat [x,y,x,y...] series at x
function at(s, x){
    for(var i = 2; i < s.length; i += 2){
        if(x <= s[i]){
            return s[i-1] + (s[i+1] - s[i-1]) * (x - s[i-2]) / (s[i] - s[i-2]);
        }
    }
    return s[s.length-1];
}

function Pane(id, top, height){
    this.svg = document.getElementById(id);
    this.w = this.svg.clientWidth;
    this.h = this.svg.clientHeight;
    this.top = top;
    this.kx = (this.w - AXIS) / PLOT;
    this.ky = this.h / height;
    this.out = '';
}
Pane.prototype.x = function(v){
    return Math.round((v - LEFT) * this.kx * 10) / 10;
}
Pane.prototype.y = function(v){
    return Math.round((v - this.top) * this.ky * 10) / 10;
}
Pane.prototype.line = function(x1, y1, x2, y2, color, width, dash){
    var o = (width || 1) % 2 && y1 === y2 ? .5 : 0;
    this.out += '<line x1="' + this.x(x1) + '" y1="' + (this.y(y1) + o) + '" x2="' + this.x(x2) + '" y2="' + (this.y(y2) + o) + '" stroke="' + color + '" stroke-width="' + (width || 1) + '"' + (dash ? ' stroke-dasharray="' + dash + '"' : '') + '/>';
}
Pane.prototype.poly = function(pts, fill, stroke, width, dash){
    var p = [];
    for(var i = 0; i < pts.length; i += 2){
        p.push(this.x(pts[i]) + ',' + this.y(pts[i+1]));
    }
    this.out += '<poly' + (stroke ? 'line' : 'gon') + ' points="' + p.join(' ') + '" fill="' + (fill || 'none') + '"' + (stroke ? ' stroke="' + stroke + '" stroke-width="' + width + '"' : '') + (dash ? ' stroke-dasharray="' + dash + '"' : '') + '/>';
}
Pane.prototype.rect = function(x, y, w, h, fill, stroke){
    this.out += '<rect x="' + this.x(x) + '" y="' + this.y(y) + '" width="' + Math.round(w * this.kx * 10) / 10 + '" height="' + Math.round(h * this.ky * 10) / 10 + '" fill="' + fill + '"' + (stroke ? ' stroke="' + stroke + '"' : '') + '/>';
}
Pane.prototype.text = function(x, y, str, color, extra){
    this.out += '<text x="' + this.x(x) + '" y="' + this.y(y) + '" fill="' + color + '"' + (extra || '') + '>' + str + '</text>';
}
Pane.prototype.box = function(x, y, w, h, str, color, border, size, radius, weight){
    var px = Math.round(this.x(x)), py = Math.round(this.y(y));
    this.out += '<rect x="' + (px + .5) + '" y="' + (py + .5) + '" width="' + w + '" height="' + h + '" rx="' + radius + '" fill="#fff" fill-opacity="' + (radius ? .6 : 1) + '" stroke="' + border + '"/>' +
        '<text x="' + (px + w / 2) + '" y="' + (py + h / 2 + size * .4) + '" text-anchor="middle" font-size="' + size + '" font-weight="' + weight + '" fill="' + color + '">' + str + '</text>';
}
Pane.prototype.marks = function(pts, dir, color, size){
    for(var i = 0; i < pts.length; i += 2){
        var x = this.x(pts[i]), y = this.y(pts[i+1]);
        this.out += '<path d="M' + (x - size) + ' ' + (y + dir * size * .8) + 'h' + size * 2 + 'L' + x + ' ' + (y - dir * size * .8) + 'z" fill="' + color + '"/>';
    }
}
Pane.prototype.grid = function(rows){
    var i;
    for(i = 0; i < dates.length; i++){
        this.line(dates[i][0], this.top, dates[i][0], this.top + 700, GRID, 1, '1 5');
    }
    for(i = 0; i < rows.length; i++){
        this.line(LEFT, rows[i], LEFT + PLOT, rows[i], GRID, 1, '1 5');
    }
}
// labels: [y, text, colour, boxed]
Pane.prototype.axis = function(labels){
    var x = this.w - AXIS, i, l, y, w;
    this.out += '<rect x="' + x + '" y="0" width="' + AXIS + '" height="' + this.h + '" fill="#fff"/><path d="M' + (x - .5) + ' 0v' + this.h + '" stroke="' + EDGE + '"/>';
    for(i = 0; i < labels.length; i++){
        l = labels[i];
        y = Math.round(this.y(l[0]));
        this.out += '<path d="M' + x + ' ' + (y + .5) + 'h4" stroke="' + (l[3] ? l[2] : EDGE) + '"/>';
        if(l[3]){
            w = 4 + l[1].length * 5 - (l[1].indexOf(',') > 0 ? 2 : 0);
            this.out += '<rect x="' + (x + 4.5) + '" y="' + (y - 6.5) + '" width="' + w + '" height="13" fill="#f3f3f3" stroke="' + EDGE + '"/>';
        }
        this.out += '<text x="' + (x + 6) + '" y="' + (y + 3) + '" fill="' + l[2] + '">' + l[1] + '</text>';
    }
}
Pane.prototype.done = function(){
    this.svg.innerHTML = this.out;
}

function drawPrice(){
    var p = new Pane('price', 23, 656), i, c, x, a, b, slope, rows = [], labels = [];
    for(i = 0; i < 19; i++){
        rows.push(44 + Math.round(i * 33.9));
        labels.push([44 + Math.round(i * 33.9), i === 9 ? '1,3' : '1,' + (39 - i), '#111']);
    }
    p.grid(rows);
    for(i = 0; i < clouds.length; i++){
        p.poly(clouds[i][1], clouds[i][0]);
    }
    for(i = 0; i < zones.length; i++){
        p.rect.apply(p, zones[i]);
    }
    for(i = 0; i < segments.length; i++){
        p.line.apply(p, segments[i]);
    }
    // ribbon between both averages
    for(x = 28; x < 1348; x += 5){
        a = at(fast, x); b = at(fast, x + 5);
        p.poly([x, a, x + 5, b, x + 5, at(slow, x + 5), x, at(slow, x)], a < at(slow, x) ? 'rgba(0,130,0,.16)' : 'rgba(240,0,0,.18)');
    }
    p.poly(slow, '', '#8c0000', 2, '6 5');
    for(i = 0; i < trend.length; i++){
        p.poly(trend[i][1], '', trend[i][0], 4, '8 7');
    }
    for(x = 28; x < 1348; x += 5){
        a = at(fast, x); b = at(fast, x + 5); slope = b - a;
        c = slope < -6 ? '#00e400' : slope < -2 ? '#009c00' : slope < 1 ? '#1c5c08' : slope < 6 ? '#8c0000' : '#f00000';
        p.poly([x, a, x + 5, b], '', c, 4);
    }
    for(i = 0; i < candles.length; i++){
        c = candles[i].split(',');
        x = Math.round(p.x(c[0])) + .5;
        p.out += '<path d="M' + x + ' ' + p.y(c[1]) + 'V' + p.y(c[4]) + '" stroke="#000"/>' +
            '<rect x="' + (x - 2) + '" y="' + (Math.round(p.y(c[2])) + .5) + '" width="4" height="' + Math.max(1, Math.round((c[3] - c[2]) * p.ky)) + '" fill="' + colors[c[5]] + '" stroke="#000"/>';
    }
    for(i = 0; i < overlay.length; i++){
        p.line.apply(p, overlay[i]);
    }
    p.out += '<ellipse cx="' + p.x(880) + '" cy="' + p.y(56) + '" rx="' + 115 * p.kx + '" ry="' + 27 * p.ky + '" fill="rgba(0,255,0,.17)" stroke="#0f0"/>';
    // projected path
    p.line(1422, 311, 1456, 357, '#000', 2, '2 4');
    p.line(1594, 359, 1850, 53, '#000', 2, '2 4');
    p.poly([1463, 362, 1450, 357, 1460, 350], '#000');
    p.poly([1858, 44, 1846, 49, 1856, 56], '#000');
    for(i = 0; i < fibTexts.length; i++){
        p.text.apply(p, fibTexts[i]);
    }
    for(i = 0; i < fibBoxes.length; i++){
        c = fibBoxes[i];
        p.box(c[0], c[1], 45, 14, c[2], c[3], c[3], 9, 0, 'bold');
    }
    for(i = 0; i < waves.length; i++){
        c = waves[i];
        p.box(c[0], c[1], c[2], c[3], c[4], '#222', '#5a96ff', c[5], 3, 'normal');
    }
    p.text(30, 677, 'IT-Finance.com - Tiempo Real', '#111', ' font-size="10" font-weight="normal"');
    p.axis(labels.concat([[203,'1,34307','#a87800',1],[218,'1,33776','#b00000',1],[231,'1,33593','#b00000',1]]));
    p.done();
}

// trailing average used for the signal lines
function lagged(s, back){
    var out = [], x, k, sum;
    for(x = 28; x <= 1348; x += 5){
        for(k = 0, sum = 0; k < 5; k++){
            sum += at(s, Math.max(28, x - k * back / 2));
        }
        out.push(x, sum / 5);
    }
    return out;
}

function drawTrains(){
    var p = new Pane('trenes', 680, 101), x, a, b, sig = lagged(train, 12), fastSig = lagged(stoch, 3);
    p.grid([706, 723, 741, 759]);
    p.rect(28, 688, LAST - 28, 18, '#daf6da');
    p.rect(28, 759, LAST - 28, 18, '#ffdada');
    for(x = 28; x < 1348; x += 5){
        a = at(train, x); b = at(train, x + 5);
        p.poly([x, a, x + 5, b, x + 5, at(sig, x + 5), x, at(sig, x)], a < at(sig, x) ? 'rgba(0,0,160,.25)' : 'rgba(220,0,200,.25)');
        if(a < 706 && b < 706){
            p.poly([x, a, x + 5, b, x + 5, 706, x, 706], 'rgba(0,110,0,.45)');
        }
        if(a > 759 && b > 759){
            p.poly([x, a, x + 5, b, x + 5, 759, x, 759], 'rgba(120,0,0,.4)');
        }
    }
    p.line(28, 688, LAST, 688, '#000');
    p.line(28, 706, LAST, 706, '#000');
    p.line(28, 732, LAST, 732, '#000090', 1, '5 3');
    p.line(28, 759, LAST, 759, '#000');
    p.line(28, 777, LAST, 777, '#000');
    p.poly(fastSig, '', '#123', 1, '3 2');
    for(x = 28; x < 1348; x += 5){
        p.poly([x, at(stoch, x), x + 5, at(stoch, x + 5)], '', at(stoch, x + 5) > at(stoch, x) ? '#d82020' : '#000', 1.5);
    }
    p.poly(sig, '', '#222', 3, '6 5');
    for(x = 28; x < 1348; x += 5){
        p.poly([x, at(train, x), x + 5, at(train, x + 5)], '', at(train, x + 5) > at(train, x) ? '#ff0000' : '#000090', 4);
    }
    p.marks(trainDown, -1, '#b40000', 5);
    p.marks(trainUp, 1, '#0000b4', 5);
    p.axis([[722,'60','#111'],[730,'50','#0000b0',1],[741,'39,956','#222',1],[748,'31,890','#222',1],[755,'24,380','#e02020',1],[688,'100','#111',1],[706,'80','#111',1],[760,'20','#111',1],[774,'0','#111',1]]);
    p.done();
}

function drawWilly(){
    var p = new Pane('willy', 782, 72), c, i, b, x, y1, y2;
    p.grid([819, 851]);
    for(c in willyBands){
        b = willyBands[c];
        for(i = 0; i < b.length; i += 2){
            p.rect(b[i], 782, b[i+1] - b[i], 72, c);
        }
    }
    p.line(28, 787, LAST, 787, '#000', 1, '5 3');
    p.line(28, 819, LAST, 819, '#0000a0', 1, '5 3');
    p.line(28, 851, LAST, 851, '#000', 1, '5 3');
    for(x = 28; x < 1348; x += 2){
        y1 = at(willy, x); y2 = at(willy, x + 2);
        if(y1 < 803){
            p.poly([x, y1, x + 2, y2, x + 2, 803, x, 803], 'rgba(0,130,0,.35)');
        }
        if(y1 > 835){
            p.poly([x, y1, x + 2, y2, x + 2, 835, x, 835], 'rgba(110,0,0,.5)');
        }
    }
    p.line(28, 803, LAST, 803, '#0c0ca0', 2);
    p.line(28, 835, LAST, 835, '#d00000', 2);
    for(x = 28; x < 1348; x += 2){
        y1 = at(willy, x); y2 = at(willy, x + 2);
        c = y1 < 803 ? '#00cc00' : y1 > 836 ? '#900000' : y2 < y1 ? '#0000d0' : '#ff9800';
        p.poly([x, y1, x + 2, y2], '', c, 3);
    }
    p.marks([126,819,147,819,168,820,463,820,927,819,1016,820], 1, '#0000b4', 6);
    p.marks([141,819,157,819,443,819,875,819,933,819,1188,819], -1, '#b40000', 6);
    p.axis([[788,'0','#111',1],[803,'-25','#0000a0',1],[819,'-50','#0000a0',1],[832,'-75','#c00000',1],[843,'-87,006','#a01010',1],[847,'-100','#111',1]]);
    p.done();
}

function drawAwesome(){
    var p = new Pane('awesome', 855, 72), x, a, b, up;
    p.grid([872, 912]);
    for(x = 30; x < 1349; x += 5.18){
        a = at(osc, x); b = at(oscSignal, x); up = at(osc, x + 5) < a;
        p.rect(x - 1, Math.min(a, b), 1, Math.abs(a - b), b < a ? '#f8a0a0' : '#90e890');
        p.rect(x - 1, Math.min(a, 892), 3, Math.abs(a - 892), a < 892 ? (up ? '#0000ff' : '#ff00ff') : (up ? '#008080' : '#f00000'));
    }
    p.line(28, 892, LAST, 892, '#0000ff', 2);
    for(x = 28; x < 1348; x += 4){
        p.poly([x, at(osc, x), x + 4, at(osc, x + 4)], '', at(osc, x + 4) < at(osc, x) ? '#00003c' : '#b000b0', 3);
    }
    for(x = 28; x < 1348; x += 4){
        p.poly([x, at(oscSignal, x), x + 4, at(oscSignal, x + 4)], '', at(oscSignal, x + 4) < at(oscSignal, x) ? '#66ff66' : '#ff9800', 3);
    }
    p.marks(oscDown, -1, '#f4f400', 5);
    p.marks(oscUp, 1, '#00f0f0', 5);
    p.axis([[872,'0,02','#111'],[912,'-0,02','#111'],[886,'0','#1010ff',1],[892,'0','#ff1010',1],[898,'-0,0007','#ff1010',1],[905,'-0,0067','#ff9800',1]]);
    p.done();
}

function drawForce(){
    var p = new Pane('barra', 928, 67), from = 28, i, x, y;
    p.grid([942, 959, 993]);
    for(i = 0; i < states.length; i += 2){
        p.rect(from, 928, states[i] - from, 67, states[i+1]);
        from = states[i];
    }
    for(x = 30; x < 1349; x += 5.18){
        y = at(force, x);
        p.rect(x - 2, y, 5, 995 - y, at(force, x) < at(force, x - 5) ? 'rgba(0,0,190,.75)' : 'rgba(210,30,30,.75)');
        p.rect(x - 1, y + 2, 3, 995 - y, 'none', 'rgba(255,255,255,.18)');
    }
    p.line(28, 976, LAST, 976, '#000');
    p.axis([[942,'0,50002','#111'],[959,'0,50001','#111'],[976,'0,50000','#111',1],[988,'0,49999','#1010ff',1]]);
    p.done();
}

function drawDates(){
    var p = new Pane('dates', 996, 14), i;
    for(i = 0; i < dates.length; i++){
        p.line(dates[i][0], 996, dates[i][0], 998, EDGE);
        p.text(dates[i][0], 1008, dates[i][1], '#111', ' text-anchor="middle"');
    }
    p.done();
}

function draw(){
    drawPrice();
    drawTrains();
    drawWilly();
    drawAwesome();
    drawForce();
    drawDates();
}
window.onresize = draw;
draw();
```
